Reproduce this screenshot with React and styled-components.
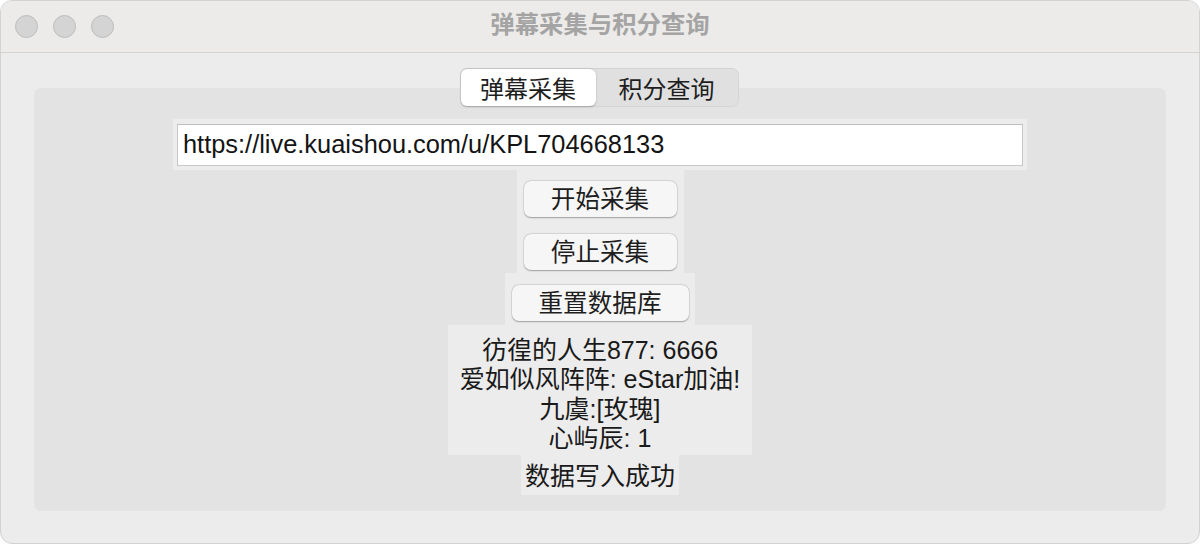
import React from "react";
import styled, { createGlobalStyle } from "styled-components";

const GlobalStyle = createGlobalStyle`
  html, body {
    margin: 0;
    padding: 0;
    background: #ffffff;
  }
  body {
    font-family: "Liberation Sans", "Noto Sans CJK SC", sans-serif;
    color: #1d1d1d;
  }
`;

const SWindow = styled.div`
  width: 1200px;
  height: 544px;
  box-sizing: border-box;
  background: #ececec;
  border-radius: 12px;
  border: 1px solid #d2d2d2;
  overflow: hidden;
  display: flex;
  flex-direction: column;
`;

const STitleBar = styled.div`
  height: 51px;
  flex-shrink: 0;
  background: #ecebe9;
  border-bottom: 1px solid #d3d3d3;
  display: flex;
  align-items: center;
  position: relative;
`;

const SLights = styled.div`
  display: flex;
  gap: 15px;
  padding-left: 14px;
`;

const SLight = styled.span`
  width: 21px;
  height: 21px;
  border-radius: 50%;
  background: #d4d4d4;
  border: 1px solid #bdbdbd;
`;

const STitle = styled.div`
  position: absolute;
  left: 0;
  right: 0;
  top: 8px;
  text-align: center;
  font-size: 24.4px;
  line-height: 32px;
  font-weight: bold;
  color: #a4a4a4;
  pointer-events: none;
`;

const SBody = styled.div`
  flex: 1;
  padding: 15px 33px 32px 33px;
  display: flex;
  flex-direction: column;
`;

const STabs = styled.div`
  align-self: center;
  display: flex;
  height: 39px;
  box-sizing: border-box;
  background: #e0e0e0;
  border: 1px solid #d4d4d4;
  border-radius: 7px;
  margin-bottom: -19px;
  position: relative;
  z-index: 1;
  transform: translateX(-1px);
`;

const STab = styled.div`
  display: flex;
  align-items: center;
  justify-content: center;
  width: ${p => p.w}px;
  font-size: 24px;
  color: #1e1e1e;
  border-radius: 6px;
  background: ${p => (p.active ? "#ffffff" : "transparent")};
  box-shadow: ${p => (p.active ? "0 0.5px 2px rgba(0,0,0,0.25)" : "none")};
`;

const SPanel = styled.div`
  flex: 1;
  background: #e3e3e3;
  border-radius: 7px;
  padding-top: 31px;
  display: flex;
  flex-direction: column;
  align-items: center;
`;

const SCell = styled.div`
  background: #ececec;
  width: ${p => p.w}px;
  height: ${p => p.h}px;
  box-sizing: border-box;
  display: flex;
  flex-direction: column;
  align-items: center;
  justify-content: ${p => p.justify || "center"};
  padding-top: ${p => p.pt || 0}px;
`;

const SEntry = styled.div`
  width: 846px;
  height: 42px;
  box-sizing: border-box;
  background: #ffffff;
  border: 1px solid #c9c9c9;
  border-top-color: #bdbdbd;
  display: flex;
  align-items: center;
  padding-left: 5px;
  font-size: 25.4px;
  color: #141414;
`;

const SButton = styled.div`
  width: ${p => p.w}px;
  height: 36px;
  box-sizing: border-box;
  background: #f6f6f6;
  border-radius: 7px;
  box-shadow: 0 0.5px 1.5px rgba(0, 0, 0, 0.3), 0 0 0 0.5px rgba(0, 0, 0, 0.08);
  display: flex;
  align-items: center;
  justify-content: center;
  font-size: 24.6px;
  line-height: 30px;
  color: #1e1e1e;
  padding-top: 2px;
`;

const SLine = styled.div`
  font-size: 25px;
  line-height: 29.5px;
  color: #1a1a1a;
  white-space: nowrap;
`;

const SMessages = styled.div`
  padding-top: 9px;
  display: flex;
  flex-direction: column;
  align-items: center;
`;

const messages = [
  "彷徨的人生877: 6666",
  "爱如似风阵阵: eStar加油!",
  "九虞:[玫瑰]",
  "心屿辰: 1"
];

const App = () => (
  <>
    <GlobalStyle />
    <SWindow>
      <STitleBar>
        <SLights>
          <SLight />
          <SLight />
          <SLight />
        </SLights>
        <STitle>弹幕采集与积分查询</STitle>
      </STitleBar>
      <SBody>
        <STabs>
          <STab active w={135}>弹幕采集</STab>
          <STab w={142}>积分查询</STab>
        </STabs>
        <SPanel>
          <SCell w={854} h={51}>
            <SEntry>https://live.kuaishou.com/u/KPL704668133</SEntry>
          </SCell>
          <SCell w={167} h={52} justify="flex-start" pt={11}>
            <SButton w={153}>开始采集</SButton>
          </SCell>
          <SCell w={167} h={51} justify="flex-start" pt={12}>
            <SButton w={153}>停止采集</SButton>
          </SCell>
          <SCell w={190} h={52} justify="flex-start" pt={12}>
            <SButton w={177}>重置数据库</SButton>
          </SCell>
          <SCell w={304} h={130}>
            <SMessages>
              {messages.map(m => (
                <SLine key={m}>{m}</SLine>
              ))}
            </SMessages>
          </SCell>
          <SCell w={158} h={40} pt={4}>
            <SLine>数据写入成功</SLine>
          </SCell>
        </SPanel>
      </SBody>
    </SWindow>
  </>
);

export default App;
